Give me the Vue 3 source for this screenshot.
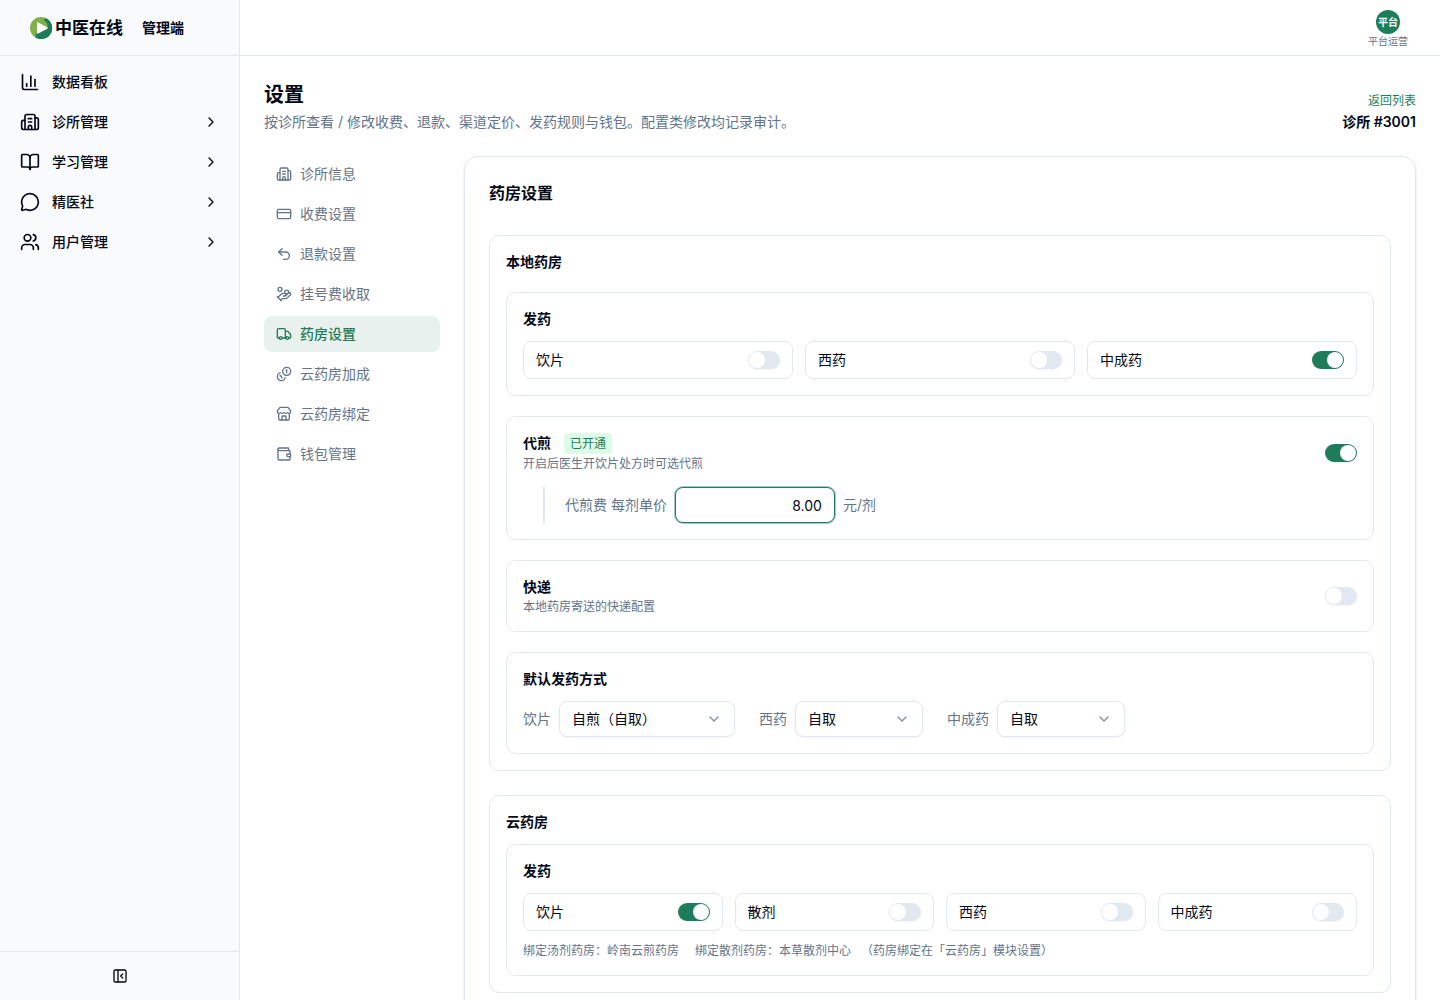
<script setup>
import { ref, reactive, h } from 'vue'

const icons = {
  chart: ['M3 3v16a2 2 0 0 0 2 2h16', 'M18 17V9', 'M13 17V5', 'M8 17v-3'],
  building: [
    'M10 12h4', 'M10 8h4', 'M14 21v-3a2 2 0 0 0-4 0v3',
    'M6 10H4a2 2 0 0 0-2 2v7a2 2 0 0 0 2 2h16a2 2 0 0 0 2-2V9a2 2 0 0 0-2-2h-2',
    'M6 21V5a2 2 0 0 1 2-2h8a2 2 0 0 1 2 2v16',
  ],
  book: [
    'M12 7v14',
    'M3 18a1 1 0 0 1-1-1V4a1 1 0 0 1 1-1h5a4 4 0 0 1 4 4 4 4 0 0 1 4-4h5a1 1 0 0 1 1 1v13a1 1 0 0 1-1 1h-6a3 3 0 0 0-3 3 3 3 0 0 0-3-3z',
  ],
  message: ['M2.992 16.342a2 2 0 0 1 .094 1.167l-1.065 3.29a1 1 0 0 0 1.236 1.168l3.413-.998a2 2 0 0 1 1.099.092 10 10 0 1 0-4.777-4.719'],
  users: [
    'M16 21v-2a4 4 0 0 0-4-4H6a4 4 0 0 0-4 4v2', 'M16 3.128a4 4 0 0 1 0 7.744',
    'M22 21v-2a4 4 0 0 0-3-3.87', [9, 7, 4],
  ],
  card: ['M4 5h16a2 2 0 0 1 2 2v10a2 2 0 0 1-2 2H4a2 2 0 0 1-2-2V7a2 2 0 0 1 2-2z', 'M2 10h20'],
  undo: ['M9 14 4 9l5-5', 'M4 9h10.5a5.5 5.5 0 0 1 5.5 5.5a5.5 5.5 0 0 1-5.5 5.5H11'],
  hand: [
    'M11 15h2a2 2 0 1 0 0-4h-3c-.6 0-1.1.2-1.4.6L3 17',
    'm7 21 1.6-1.4c.3-.4.8-.6 1.4-.6h4c1.1 0 2.1-.4 2.8-1.2l4.6-4.4a2 2 0 0 0-2.75-2.91l-4.2 3.9',
    'm2 16 6 6', [16, 9, 2.9], [6, 5, 3],
  ],
  truck: [
    'M14 18V6a2 2 0 0 0-2-2H4a2 2 0 0 0-2 2v11a1 1 0 0 0 1 1h2', 'M15 18H9',
    'M19 18h2a1 1 0 0 0 1-1v-3.65a1 1 0 0 0-.22-.624l-3.48-4.35A1 1 0 0 0 17.52 8H14',
    [17, 18, 2], [7, 18, 2],
  ],
  coins: ['M13.744 17.736a6 6 0 1 1-7.48-7.48', 'M15 6h1v4', 'm6.134 14.768.866-.5 2 3.464', [16, 8, 6]],
  store: [
    'M15 21v-5a1 1 0 0 0-1-1h-4a1 1 0 0 0-1 1v5',
    'M17.774 10.31a1.12 1.12 0 0 0-1.549 0 2.5 2.5 0 0 1-3.451 0 1.12 1.12 0 0 0-1.548 0 2.5 2.5 0 0 1-3.452 0 1.12 1.12 0 0 0-1.549 0 2.5 2.5 0 0 1-3.77-3.248l2.889-4.184A2 2 0 0 1 7 2h10a2 2 0 0 1 1.653.873l2.895 4.192a2.5 2.5 0 0 1-3.774 3.244',
    'M4 10.95V19a2 2 0 0 0 2 2h12a2 2 0 0 0 2-2v-8.05',
  ],
  wallet: [
    'M19 7V4a1 1 0 0 0-1-1H5a2 2 0 0 0 0 4h15a1 1 0 0 1 1 1v4h-3a2 2 0 0 0 0 4h3a1 1 0 0 0 1-1v-2a1 1 0 0 0-1-1',
    'M3 5v14a2 2 0 0 0 2 2h15a1 1 0 0 0 1-1v-4',
  ],
  right: ['m9 18 6-6-6-6'],
  down: ['m6 9 6 6 6-6'],
  collapse: ['M5 3h14a2 2 0 0 1 2 2v14a2 2 0 0 1-2 2H5a2 2 0 0 1-2-2V5a2 2 0 0 1 2-2z', 'M9 3v18', 'm16 15-3-3 3-3'],
}

const Icon = (props) =>
  h(
    'svg',
    {
      width: props.size, height: props.size, viewBox: '0 0 24 24', fill: 'none', stroke: 'currentColor',
      'stroke-width': 2, 'stroke-linecap': 'round', 'stroke-linejoin': 'round', 'aria-hidden': 'true',
    },
    icons[props.name].map((s) =>
      Array.isArray(s) ? h('circle', { cx: s[0], cy: s[1], r: s[2] }) : h('path', { d: s }),
    ),
  )
Icon.props = ['name', 'size']

const menu = [
  { icon: 'chart', label: '数据看板' },
  { icon: 'building', label: '诊所管理', children: true },
  { icon: 'book', label: '学习管理', children: true },
  { icon: 'message', label: '精医社', children: true },
  { icon: 'users', label: '用户管理', children: true },
]

const tabs = [
  { icon: 'building', label: '诊所信息' },
  { icon: 'card', label: '收费设置' },
  { icon: 'undo', label: '退款设置' },
  { icon: 'hand', label: '挂号费收取' },
  { icon: 'truck', label: '药房设置' },
  { icon: 'coins', label: '云药房加成' },
  { icon: 'store', label: '云药房绑定' },
  { icon: 'wallet', label: '钱包管理' },
]
const activeTab = ref('药房设置')

const localDispense = reactive([
  { label: '饮片', on: false },
  { label: '西药', on: false },
  { label: '中成药', on: true },
])
const cloudDispense = reactive([
  { label: '饮片', on: true },
  { label: '散剂', on: false },
  { label: '西药', on: false },
  { label: '中成药', on: false },
])
const decoct = ref(true)
const express = ref(false)
const price = ref('8.00')
const methods = reactive([
  { id: 'method-herb', label: '饮片', value: '自煎（自取）', options: ['自煎（自取）', '代煎（自取）'], wide: true },
  { id: 'method-western', label: '西药', value: '自取', options: ['自取', '快递'] },
  { id: 'method-patent', label: '中成药', value: '自取', options: ['自取', '快递'] },
])
</script>

<template>
  <div class="app">
    <aside class="sidebar">
      <div class="brand">
        <div class="logo">
          <svg width="22" height="22" viewBox="0 0 22 22" aria-hidden="true">
            <circle cx="11" cy="11" r="11" fill="#7fb04a" />
            <path d="M16 1.200A11 11 0 1 1 5.2 20.3C6.500 19 5.600 15.800 7 15.800L17 12C18.600 8 17 5 13.500 3.200z" fill="#1d7d5a" />
            <path d="M7 6.200v9.600q0 1.300 1.200.6l9-4.700q1-.7 0-1.400L8.200 5.600q-1.200-.7-1.200.6z" fill="#fff" />
          </svg>
          <span class="logo-name">中医在线</span>
        </div>
        <span class="brand-role">管理端</span>
      </div>
      <nav class="menu" aria-label="主导航">
        <button v-for="m in menu" :key="m.label" type="button" class="menu-item">
          <Icon :name="m.icon" :size="20" />
          <span class="menu-label">{{ m.label }}</span>
          <Icon v-if="m.children" name="right" :size="16" />
        </button>
      </nav>
      <div class="sidebar-foot">
        <button type="button" class="collapse" aria-label="收起侧栏"><Icon name="collapse" :size="16" /></button>
      </div>
    </aside>

    <div class="body">
      <header class="topbar">
        <button type="button" class="account">
          <span class="avatar">平台</span>
          <span class="account-name">平台运营</span>
        </button>
      </header>

      <main class="main">
        <div class="page-head">
          <div>
            <h1>设置</h1>
            <p class="page-desc">按诊所查看 / 修改收费、退款、渠道定价、发药规则与钱包。配置类修改均记录审计。</p>
          </div>
          <div class="clinic">
            <a href="#">返回列表</a>
            <strong>诊所 #3001</strong>
          </div>
        </div>

        <div class="columns">
          <nav class="tabs" aria-label="设置分类">
            <button
              v-for="t in tabs" :key="t.label" type="button"
              class="tab" :class="{ active: t.label === activeTab }" @click="activeTab = t.label"
            >
              <Icon :name="t.icon" :size="16" />
              <span>{{ t.label }}</span>
            </button>
          </nav>

          <div class="card">
            <h2>药房设置</h2>

            <section class="section local">
              <h3>本地药房</h3>
              <div class="panel">
                <h4>发药</h4>
                <div class="switches three">
                  <label v-for="d in localDispense" :key="d.label" class="switch-box">
                    <span>{{ d.label }}</span>
                    <input v-model="d.on" type="checkbox" role="switch" class="switch" />
                  </label>
                </div>
              </div>

              <div class="panel">
                <div class="toggle-row">
                  <div class="toggle-text">
                    <div class="toggle-title"><h4 id="decoct">代煎</h4><span class="badge">已开通</span></div>
                    <p class="hint">开启后医生开饮片处方时可选代煎</p>
                  </div>
                  <input v-model="decoct" type="checkbox" role="switch" class="switch" aria-labelledby="decoct" />
                </div>
                <div class="fee">
                  <label for="fee">代煎费 每剂单价</label>
                  <input id="fee" v-model="price" type="text" inputmode="decimal" class="fee-input" />
                  <span>元/剂</span>
                </div>
              </div>

              <div class="panel">
                <div class="toggle-row">
                  <div class="toggle-text">
                    <h4 id="express">快递</h4>
                    <p class="hint">本地药房寄送的快递配置</p>
                  </div>
                  <input v-model="express" type="checkbox" role="switch" class="switch" aria-labelledby="express" />
                </div>
              </div>

              <div class="panel">
                <h4>默认发药方式</h4>
                <div class="methods">
                  <div v-for="m in methods" :key="m.id" class="method">
                    <label :for="m.id">{{ m.label }}</label>
                    <div class="select" :class="{ wide: m.wide }">
                      <select :id="m.id" v-model="m.value">
                        <option v-for="o in m.options" :key="o">{{ o }}</option>
                      </select>
                      <Icon class="select-arrow" name="down" :size="16" />
                    </div>
                  </div>
                </div>
              </div>
            </section>

            <section class="section">
              <h3>云药房</h3>
              <div class="panel">
                <h4>发药</h4>
                <div class="switches four">
                  <label v-for="d in cloudDispense" :key="d.label" class="switch-box">
                    <span>{{ d.label }}</span>
                    <input v-model="d.on" type="checkbox" role="switch" class="switch" />
                  </label>
                </div>
                <div class="bindings">
                  <span>绑定汤剂药房：岭南云煎药房</span>
                  <span>绑定散剂药房：本草散剂中心</span>
                  <span>（药房绑定在「云药房」模块设置）</span>
                </div>
              </div>
            </section>
          </div>
        </div>
      </main>
    </div>
  </div>
</template>

<style>
body {
  margin: 0;
  background: #fff;
}
</style>

<style scoped>
.app {
  --ink: #020817;
  --muted: #64748b;
  --line: #e2e8f0;
  --green: #1d7d5a;
  display: flex;
  height: 100vh;
  overflow: hidden;
  color: var(--ink);
  font-family: Inter, "Noto Sans CJK SC", sans-serif;
  font-size: 14px;
  line-height: 20px;
}
.app *,
.app *::before {
  box-sizing: border-box;
}
h1, h2, h3, h4, p {
  margin: 0;
}
button, input, select {
  font: inherit;
  color: inherit;
}
button {
  border: 0;
  padding: 0;
  background: none;
  cursor: pointer;
}
svg {
  display: block;
  flex: none;
}

.sidebar {
  display: flex;
  flex-direction: column;
  flex: none;
  width: 240px;
  border-right: 1px solid var(--line);
  background: #f8fafc;
}
.brand {
  display: flex;
  align-items: center;
  gap: 19px;
  height: 56px;
  padding-left: 30px;
  border-bottom: 1px solid var(--line);
}
.logo {
  display: flex;
  align-items: center;
  gap: 3px;
}
.logo-name {
  font-size: 17px;
  font-weight: 600;
}
.brand-role {
  font-weight: 600;
}
.menu {
  display: flex;
  flex-direction: column;
  flex: 1;
  gap: 4px;
  padding: 8px;
}
.menu-item {
  display: flex;
  align-items: center;
  gap: 12px;
  height: 36px;
  padding: 0 12px;
  border-radius: 8px;
  font-weight: 500;
  text-align: left;
}
.menu-label {
  flex: 1;
}
.sidebar-foot {
  display: flex;
  justify-content: center;
  padding: 8px;
  border-top: 1px solid var(--line);
}
.collapse {
  display: grid;
  place-items: center;
  width: 32px;
  height: 32px;
}

.body {
  display: flex;
  flex-direction: column;
  flex: 1;
  min-width: 0;
}
.topbar {
  display: flex;
  align-items: center;
  justify-content: flex-end;
  flex: none;
  height: 56px;
  padding: 0 32px;
  border-bottom: 1px solid var(--line);
}
.account {
  display: flex;
  flex-direction: column;
  align-items: center;
  gap: 2px;
  font-size: 10px;
  line-height: 10px;
}
.avatar {
  display: grid;
  place-items: center;
  width: 24px;
  height: 24px;
  border-radius: 50%;
  background: var(--green);
  color: #fff;
  font-weight: 600;
}
.account-name {
  color: var(--muted);
}

.main {
  flex: 1;
  min-height: 0;
  overflow-y: auto;
  scrollbar-width: none;
  padding: 24px;
}
.page-head {
  display: flex;
  align-items: flex-end;
  justify-content: space-between;
  margin-bottom: 24px;
}
h1 {
  font-size: 20px;
  line-height: 30px;
  font-weight: 600;
  margin-bottom: 2px;
}
.page-desc {
  color: var(--muted);
}
.clinic {
  display: flex;
  flex-direction: column;
  align-items: flex-end;
  gap: 3px;
}
.clinic a {
  color: var(--green);
  font-size: 12px;
  line-height: 16px;
  text-decoration: none;
}
.clinic strong {
  font-weight: 600;
}

.columns {
  display: flex;
  align-items: flex-start;
  gap: 24px;
}
.tabs {
  display: flex;
  flex-direction: column;
  flex: none;
  gap: 4px;
  width: 176px;
}
.tab {
  display: flex;
  align-items: center;
  gap: 8px;
  height: 36px;
  padding: 0 12px;
  border-radius: 8px;
  color: var(--muted);
}
.tab.active {
  background: #e8f1ee;
  color: var(--green);
  font-weight: 500;
}

.card {
  flex: 1;
  min-width: 0;
  padding: 24px;
  border: 1px solid var(--line);
  border-radius: 14px;
  box-shadow: 0 1px 3px rgb(0 0 0 / 0.1), 0 1px 2px -1px rgb(0 0 0 / 0.1);
}
h2 {
  margin-bottom: 30px;
  font-size: 16px;
  line-height: 24px;
  font-weight: 600;
}
h3, h4 {
  font-size: 14px;
  line-height: 20px;
  font-weight: 600;
}
.section {
  display: flex;
  flex-direction: column;
  gap: 12px;
  padding: 16px;
  border: 1px solid var(--line);
  border-radius: 10px;
}
.section.local {
  gap: 20px;
}
.section + .section {
  margin-top: 24px;
}
.panel {
  display: flex;
  flex-direction: column;
  gap: 12px;
  padding: 16px;
  border: 1px solid var(--line);
  border-radius: 10px;
}
.switches {
  display: grid;
  gap: 12px;
}
.three {
  grid-template-columns: repeat(3, 1fr);
}
.four {
  grid-template-columns: repeat(4, 1fr);
}
.switch-box {
  display: flex;
  align-items: center;
  justify-content: space-between;
  padding: 8px 12px;
  border: 1px solid var(--line);
  border-radius: 8px;
}
.switch {
  appearance: none;
  display: flex;
  flex: none;
  width: 32px;
  height: 18px;
  margin: 0;
  padding: 1px;
  border-radius: 9px;
  background: var(--line);
  box-shadow: 0 1px 2px rgb(0 0 0 / 0.05);
}
.switch::before {
  content: "";
  width: 16px;
  height: 16px;
  border-radius: 50%;
  background: #fff;
}
.switch:checked {
  justify-content: flex-end;
  background: var(--green);
}

.toggle-row {
  display: flex;
  align-items: center;
  justify-content: space-between;
}
.toggle-text {
  display: flex;
  flex-direction: column;
  gap: 2px;
}
.toggle-title {
  display: flex;
  align-items: flex-start;
  gap: 13px;
}
.badge {
  padding: 3px 6px 2px;
  border-radius: 4px;
  background: #dcfce7;
  color: var(--green);
  font-size: 12px;
  line-height: 16px;
}
.hint {
  color: var(--muted);
  font-size: 12px;
  line-height: 16px;
}
.fee {
  display: flex;
  align-items: center;
  gap: 8px;
  margin: 3px 0 0 20px;
  padding-left: 20px;
  border-left: 2px solid var(--line);
  color: var(--muted);
}
.fee-input {
  width: 160px;
  height: 36px;
  padding: 0 12px;
  border: 1px solid var(--green);
  border-radius: 8px;
  outline: none;
  box-shadow: 0 0 0 1px rgb(29 125 90 / 0.4);
  color: var(--ink);
  text-align: right;
}

.methods {
  display: flex;
  flex-wrap: wrap;
  gap: 12px 24px;
}
.method {
  display: flex;
  align-items: center;
  gap: 8px;
  color: var(--muted);
}
.select {
  position: relative;
  width: 128px;
}
.select.wide {
  width: 176px;
}
.select select {
  appearance: none;
  display: block;
  width: 100%;
  height: 36px;
  padding: 0 36px 0 12px;
  border: 1px solid var(--line);
  border-radius: 8px;
  background: #fff;
  box-shadow: 0 1px 2px rgb(0 0 0 / 0.05);
  color: var(--ink);
}
.select-arrow {
  position: absolute;
  top: 10px;
  right: 13px;
  opacity: 0.8;
  pointer-events: none;
}
.bindings {
  display: flex;
  flex-wrap: wrap;
  gap: 4px 16px;
  color: var(--muted);
  font-size: 12px;
  line-height: 16px;
  text-spacing-trim: trim-start;
}
</style>
